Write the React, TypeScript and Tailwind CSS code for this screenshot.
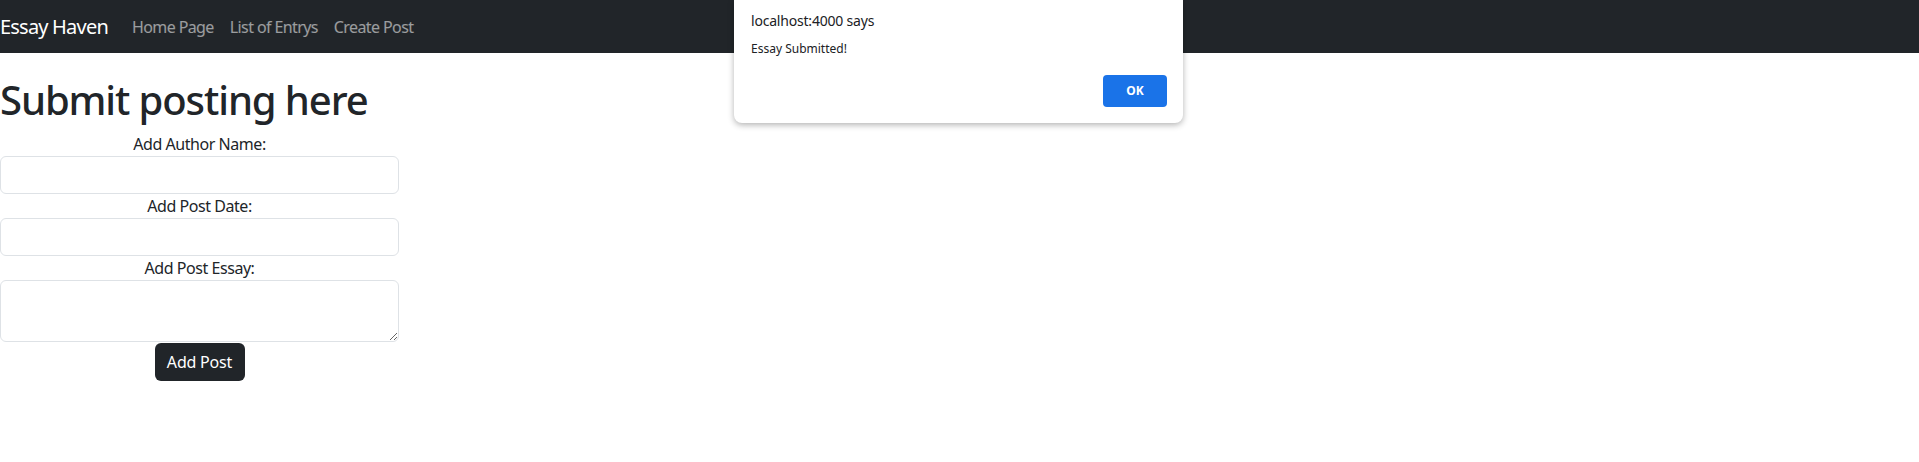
import { useState } from "react";

const navLinks = ["Home Page", "List of Entrys", "Create Post"];

const font = { fontFamily: '"Noto Sans", "Open Sans", sans-serif' };

export default function App() {
  const [author, setAuthor] = useState("");
  const [date, setDate] = useState("");
  const [essay, setEssay] = useState("");

  return (
    <div className="relative min-h-[462px] w-full bg-white text-[#212529] font-['Noto_Sans',sans-serif] tracking-[-0.45px]">
      {/* Navbar */}
      <nav className="flex h-[53px] items-center bg-[#212529]">
        <span className="mr-4 text-[20px] leading-[30px] tracking-[-0.8px] text-white">Essay Haven</span>
        {navLinks.map((link) => (
          <a key={link} href="#" className="px-2 text-base leading-6 tracking-[-0.6px] text-white/55">
            {link}
          </a>
        ))}
      </nav>

      {/* Form */}
      <main className="pt-[23px]">
        <h1 className="mb-2 text-[40px] leading-[48px] font-medium tracking-[-1.1px]">Submit posting here</h1>
        <form className="flex w-[399px] flex-col items-center text-center">
          <label className="text-base leading-6">Add Author Name:</label>
          <input
            value={author}
            onChange={(e) => setAuthor(e.target.value)}
            className="h-[38px] w-full rounded-md border border-[#dee2e6] px-3"
          />
          <label className="text-base leading-6">Add Post Date:</label>
          <input
            value={date}
            onChange={(e) => setDate(e.target.value)}
            className="h-[38px] w-full rounded-md border border-[#dee2e6] px-3"
          />
          <label className="text-base leading-6">Add Post Essay:</label>
          <textarea
            value={essay}
            onChange={(e) => setEssay(e.target.value)}
            className="block h-[62px] w-full rounded-md border border-[#dee2e6] px-3 py-1.5"
          />
          <button
            type="button"
            className="mt-px h-[38px] w-[90px] rounded-md bg-[#212529] text-base tracking-[-0.2px] text-white"
          >
            Add Post
          </button>
        </form>
      </main>

      {/* Alert dialog */}
      <div
        style={font}
        className="absolute left-[734px] top-0 h-[123px] w-[449px] rounded-b-lg bg-white tracking-normal shadow-[0_2px_6px_rgba(0,0,0,0.3)]"
      >
        <div className="pl-[17px] pt-[11px] text-[14px] leading-5 tracking-[-0.2px] text-[#202124]">localhost:4000 says</div>
        <div className="pl-[17px] pt-[10px] text-[12px] leading-4 text-[#202124]">Essay Submitted!</div>
        <div className="flex justify-end pr-4 pt-[18px]">
          <button className="h-8 w-16 rounded bg-[#1a73e8] text-[12px] font-bold text-white">OK</button>
        </div>
      </div>
    </div>
  );
}
